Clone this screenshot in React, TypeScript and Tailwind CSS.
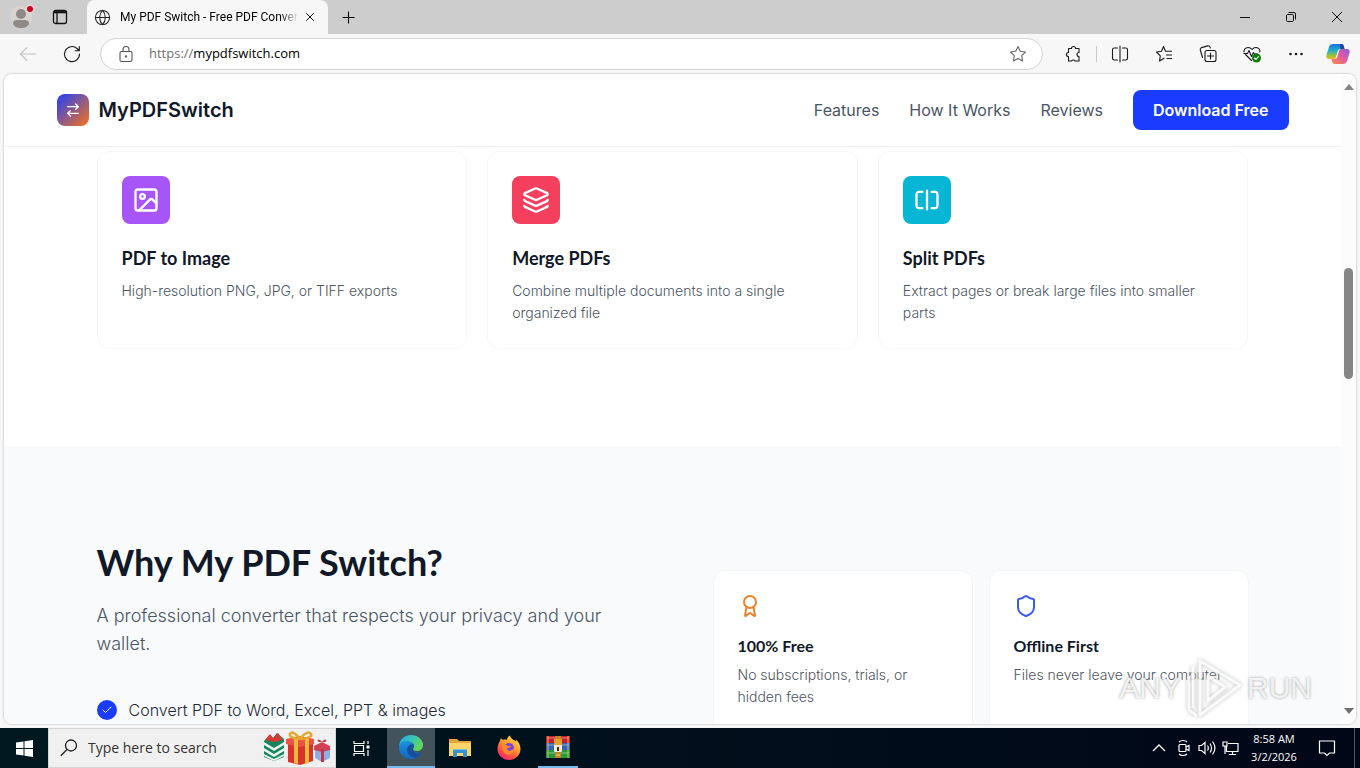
import { Award, Check, Globe, Image, Layers, Plus, Shield, X } from "lucide-react";
import type { ReactNode } from "react";

const uiFont = "font-['Open_Sans','Noto_Sans',sans-serif]";
const headingFont = "font-['Lato',sans-serif]";

const conversions = [
    { title: "PDF to Image", text: "High-resolution PNG, JPG, or TIFF exports", color: "bg-[#a855f7]", icon: <Image size={28} /> },
    { title: "Merge PDFs", text: "Combine multiple documents into a single organized file", color: "bg-[#f43f5e]", icon: <Layers size={28} /> },
    { title: "Split PDFs", text: "Extract pages or break large files into smaller parts", color: "bg-[#06b6d4]", icon: <SplitIcon /> },
];

const reasons = [
    { title: "100% Free", text: "No subscriptions, trials, or hidden fees", icon: <Award size={24} className="text-[#e8832f]" /> },
    { title: "Offline First", text: "Files never leave your computer", icon: <Shield size={24} className="text-[#3b5bef]" /> },
];

function SplitIcon() {
    return (
        <svg width="28" height="28" viewBox="0 0 24 24" fill="none" stroke="currentColor" strokeWidth="2" strokeLinecap="round" strokeLinejoin="round">
            <path d="M8 19H5c-1 0-2-1-2-2V7c0-1 1-2 2-2h3" />
            <path d="M16 5h3c1 0 2 1 2 2v10c0 1-1 2-2 2h-3" />
            <path d="M12 4v16" />
        </svg>
    );
}

function ToolButton({ label, children }: { label: string; children: ReactNode }) {
    return (
        <button aria-label={label} className="flex h-8 w-11 shrink-0 items-center justify-center">
            {children}
        </button>
    );
}

function Line({ children, className = "", size = 18 }: { children: ReactNode; className?: string; size?: number }) {
    return (
        <svg width={size} height={size} viewBox="0 0 18 18" fill="none" stroke="currentColor" strokeWidth="1.1" strokeLinecap="round" strokeLinejoin="round" className={className}>
            {children}
        </svg>
    );
}

function TabBar() {
    return (
        <div className="flex h-[34px] shrink-0 bg-[#cdcdcd]">
            <div className="flex w-[87px] shrink-0 items-center">
                <button aria-label="Profile" className="flex w-11 justify-center">
                    <svg width="26" height="26" viewBox="0 0 26 26">
                        <circle cx="12" cy="13" r="11" fill="#d9d4d0" />
                        <circle cx="12" cy="10" r="5" fill="#8f8a86" />
                        <path d="M4 19c0-2 2-3 4-3h8c2 0 4 1 4 3 0 3-4 5-8 5s-8-2-8-5z" fill="#8f8a86" />
                        <circle cx="21" cy="5" r="4.500" fill="#e6d6d6" />
                        <circle cx="21" cy="5" r="3" fill="#d0021b" />
                    </svg>
                </button>
                <button aria-label="Tab actions" className="flex w-8 justify-center">
                    <svg width="16" height="16" viewBox="0 0 16 16" fill="none" stroke="#111" strokeWidth="1.3">
                        <rect x="1.5" y="1.5" width="13" height="13" rx="2" />
                        <path d="M2 3.200h12" strokeWidth="2.200" />
                        <path d="M5 4v10" />
                    </svg>
                </button>
            </div>
            <div className="flex w-[241px] shrink-0 items-center rounded-t-lg bg-[#f7f7f7] pl-[7px]">
                <Globe size={17} strokeWidth={1.5} className="shrink-0 text-[#222]" />
                <span className="ml-[9px] w-[178px] whitespace-nowrap bg-linear-to-r from-black from-90% to-transparent bg-clip-text font-['Roboto',sans-serif] text-xs text-transparent">
                    My PDF Switch - Free PDF Conver
                </span>
                <button aria-label="Close tab" className="flex w-6 shrink-0 justify-center">
                    <X size={14} strokeWidth={1.6} />
                </button>
            </div>
            <button aria-label="New tab" className="flex w-10 items-center justify-center">
                <Plus size={19} strokeWidth={1.4} />
            </button>
            <div className="grow" />
            <button aria-label="Minimize" className="flex w-[46px] items-center justify-center">
                <svg width="12" height="12" viewBox="0 0 12 12" stroke="#111"><path d="M1 6.5h10" /></svg>
            </button>
            <button aria-label="Restore" className="flex w-[46px] items-center justify-center">
                <svg width="12" height="12" viewBox="0 0 12 12" stroke="#111" fill="none">
                    <rect x="1.5" y="3.5" width="7" height="7" rx="1.2" />
                    <path d="M3.5 1.5H9a1.5 1.5 0 0 1 1.500 1.500v5.500" />
                </svg>
            </button>
            <button aria-label="Close" className="flex w-[46px] items-center justify-center">
                <svg width="12" height="12" viewBox="0 0 12 12" stroke="#111"><path d="M1 1l10 10M11 1L1 11" /></svg>
            </button>
        </div>
    );
}

function CopilotIcon() {
    return (
        <svg width="24" height="22" viewBox="0 0 24 22">
            <defs>
                <linearGradient id="cpA" x1="0" y1="0" x2="0" y2="1">
                    <stop offset="0" stopColor="#1b6fe0" />
                    <stop offset="0.45" stopColor="#22b2c8" />
                    <stop offset="0.75" stopColor="#8fc13c" />
                    <stop offset="1" stopColor="#f2b91d" />
                </linearGradient>
                <linearGradient id="cpB" x1="1" y1="0" x2="0" y2="1">
                    <stop offset="0" stopColor="#8b5be0" />
                    <stop offset="0.5" stopColor="#e65c9c" />
                    <stop offset="1" stopColor="#f98a4b" />
                </linearGradient>
            </defs>
            <path d="M7 1h8c2 0 2.600 1 3 3l.5 2h-4c-2 0-2.500 1-3 3l-1.500 5c-.5 1.500-1 2-3 2H3c-2.500 0-3-2-2.500-4l2.500-8C3.600 2 5 1 7 1z" fill="url(#cpA)" />
            <path d="M17 21H9c-2 0-2.600-1-3-3l-.5-2h3c2 0 2.500-1 3-3L13 8c.5-1.500 1-2 3-2h5c2.500 0 3 2 2.500 4L21 18c-.6 2-2 3-4 3z" fill="url(#cpB)" />
            <path d="M13.500 1H15c2 0 2.600 1 3 3l.5 2h-4l-1-5z" fill="#1748a8" />
        </svg>
    );
}

function Toolbar() {
    return (
        <div className="flex h-10 shrink-0 items-center bg-[#f7f7f7]">
            <div className="flex w-[100px] shrink-0 items-center pl-1.5">
                <ToolButton label="Back">
                    <Line className="text-[#c4c4c4]"><path d="M16.500 9H1.500M8 2.500L1.500 9 8 15.500" /></Line>
                </ToolButton>
                <ToolButton label="Refresh">
                    <Line className="text-[#1a1a1a]"><path d="M16.500 9a7.500 7.500 0 1 1-2.500-5.500l2 2M16.300 1.500v4.200h-4.200" /></Line>
                </ToolButton>
            </div>
            <div className="flex h-8 grow items-center rounded-full border border-[#d4d4d4] bg-white pl-4 pr-[15px]">
                <Line className="shrink-0 text-[#555]">
                    <rect x="3" y="6.500" width="12" height="10" rx="1.500" />
                    <path d="M6 6.500V4.500a3 3 0 0 1 6 0v2" />
                    <circle cx="9" cy="11.500" r=".6" fill="currentColor" />
                </Line>
                <label htmlFor="address" className={`${uiFont} ml-3.5 text-[13px] text-[#707070]`}>https://</label>
                <input id="address" defaultValue="mypdfswitch.com" className={`${uiFont} w-20 grow bg-transparent text-[13px] text-black outline-none`} />
                <Line className="shrink-0 text-[#666]"><path d="M9 1.500l2.300 4.800 5.200.7-3.800 3.700.9 5.300L9 13.500 4.400 16l.9-5.300L1.500 7l5.200-.7z" /></Line>
            </div>
            <div className="ml-2 flex shrink-0 items-center text-[#1a1a1a]">
                <ToolButton label="Extensions">
                    <Line><path d="M4.500 3.500h3a2 2 0 1 1 4 0h3.500v4a2 2 0 1 0 0 4V16h-4a2 2 0 0 0-3.500 0h-3v-4.500a2 2 0 1 1 0-4z" /></Line>
                </ToolButton>
                <div className="mx-px h-4 w-px bg-[#c9c9c9]" />
                <ToolButton label="Split screen">
                    <Line><path d="M6.500 3H3.200C2 3 1.500 3.600 1.500 4.700v8.600c0 1.100.5 1.700 1.700 1.700h3.300M11.500 3h3.300c1.200 0 1.700.6 1.700 1.700v8.600c0 1.100-.5 1.700-1.700 1.700h-3.300M9 1v16" /></Line>
                </ToolButton>
                <ToolButton label="Favorites">
                    <Line><path d="M9 13.200L4.500 16l.8-5.200L1.500 7l5-.7L8.500 1.500l2 4.800h6M11.500 10h5M12 13.500h4.500" /></Line>
                </ToolButton>
                <ToolButton label="Collections">
                    <Line>
                        <rect x="6" y="5.500" width="11" height="11" rx="2" />
                        <path d="M11.500 8v6M8.500 11h6M3.500 12.500L1.300 5a2 2 0 0 1 1.300-2.400l6-1.700a2 2 0 0 1 2.500 1.400l.2.700" />
                    </Line>
                </ToolButton>
                <ToolButton label="Browser essentials">
                    <Line>
                        <path d="M8.500 15.500L2.500 9.500M1 7C.8 2.500 6 1 9 4.500 12 1 17.500 2.500 16.800 7M1 8.500h3.500l1.500-3 2.500 6 2-4 1 1.500h3" />
                        <circle cx="13.500" cy="13" r="4.500" fill="#107c10" stroke="none" />
                        <path d="M11.500 13l1.500 1.500 2.500-3" stroke="#fff" />
                    </Line>
                </ToolButton>
                <ToolButton label="Settings and more">
                    <Line><g fill="currentColor" stroke="none"><circle cx="3.500" cy="9" r="1.300" /><circle cx="9" cy="9" r="1.300" /><circle cx="14.500" cy="9" r="1.300" /></g></Line>
                </ToolButton>
                <div className="-ml-0.5">
                    <ToolButton label="Copilot"><CopilotIcon /></ToolButton>
                </div>
            </div>
        </div>
    );
}

function Header() {
    return (
        <header className="shrink-0 border-b border-[#f0f1f3] bg-white shadow-sm">
            <div className="mx-auto flex h-[72px] max-w-7xl items-center justify-between px-6">
                <a href="#top" className="flex items-center gap-2.5">
                    <span className="flex size-8 items-center justify-center rounded-lg bg-linear-to-br/srgb from-[#1e3fff] to-[#f97316] text-white">
                        <svg width="16" height="16" viewBox="0 0 24 24" fill="none" stroke="currentColor" strokeWidth="2" strokeLinecap="round" strokeLinejoin="round">
                            <path d="M4 7h16M16 3l4 4-4 4M20 17H4M8 13l-4 4 4 4" />
                        </svg>
                    </span>
                    <span className="text-xl font-semibold text-[#111827]">MyPDFSwitch</span>
                </a>
                <nav className="flex items-center gap-[30px] text-base text-[#4b5563]">
                    <a href="#features">Features</a>
                    <a href="#how">How It Works</a>
                    <a href="#reviews">Reviews</a>
                    <button className="h-10 rounded-lg bg-[#1a3cff] px-5 font-semibold text-white">Download Free</button>
                </nav>
            </div>
        </header>
    );
}

function Features() {
    return (
        <section id="features" className="bg-white pb-[97px] pt-1">
            <div className="mx-auto grid max-w-6xl grid-cols-3 gap-5">
                {conversions.map((item) => (
                    <div key={item.title} className="rounded-xl border border-[#f5f6f8] bg-white p-6">
                        <div className={`flex size-12 items-center justify-center rounded-lg text-white ${item.color}`}>{item.icon}</div>
                        <h3 className={`${headingFont} mt-5 text-lg font-bold leading-7 text-[#111827]`}>{item.title}</h3>
                        <p className="mt-2 text-sm font-light leading-[22px] text-[#4b5563]">{item.text}</p>
                    </div>
                ))}
            </div>
        </section>
    );
}

function Why() {
    return (
        <section className="grow bg-[#f8fafc] pt-24">
            <div className="mx-auto grid max-w-6xl grid-cols-2 gap-20">
                <div>
                    <h2 className={`${headingFont} text-4xl font-bold text-[#111827]`}>Why My PDF Switch?</h2>
                    <p className="mt-5 text-lg font-light leading-7 text-[#4b5563]">A professional converter that respects your privacy and your wallet.</p>
                    <ul className="mt-10">
                        <li className="flex items-center gap-3 text-base font-light text-[#1f2937]">
                            <span className="flex size-5 items-center justify-center rounded-full bg-[#1a3cff] text-white">
                                <Check size={12} strokeWidth={2} />
                            </span>
                            Convert PDF to Word, Excel, PPT &amp; images
                        </li>
                    </ul>
                </div>
                <div className="grid grid-cols-2 gap-4 pt-7">
                    {reasons.map((item) => (
                        <div key={item.title} className="rounded-xl border border-[#f3f4f6] bg-white px-6 pb-6 pt-[23px]">
                            {item.icon}
                            <h3 className={`${headingFont} mt-4 text-base font-bold text-[#111827]`}>{item.title}</h3>
                            <p className="mt-1.5 text-sm font-light leading-[22px] text-[#4b5563]">{item.text}</p>
                        </div>
                    ))}
                </div>
            </div>
        </section>
    );
}

function ScrollBar() {
    return (
        <div className="flex w-[15px] shrink-0 flex-col items-center bg-[#fcfcfc] py-2.5">
            <svg width="10" height="6" viewBox="0 0 10 6" fill="#858585"><path d="M5 0l5 6H0z" /></svg>
            <div className="flex w-full grow flex-col items-center pt-[178px]">
                <div className="h-[111px] w-[9px] rounded-full bg-[#858585]" />
            </div>
            <svg width="10" height="6" viewBox="0 0 10 6" fill="#707070"><path d="M5 6l5-6H0z" /></svg>
        </div>
    );
}

function Watermark() {
    return (
        <div className="pointer-events-none absolute bottom-1 right-11 flex items-center font-['Liberation_Sans',sans-serif] text-[30px] leading-none text-white/80 [text-shadow:0_0_3px_#9a9a9a]">
            <span>ANY</span>
            <svg width="66" height="64" viewBox="0 0 66 64" fill="none" strokeLinejoin="round" className="drop-shadow-[0_0_2px_#b0b0b0]">
                <path d="M19 5l40 24-40 30zM27 20v25l17-14zM8 20v34l8 6M12 10v42" stroke="#fff" strokeOpacity=".85" strokeWidth="3" />
            </svg>
            <span>RUN</span>
        </div>
    );
}

function GiftsIcon() {
    return (
        <svg width="70" height="34" viewBox="0 0 70 34">
            <path d="M2 10l6-6 3 3 4-5 7 6v18l-10 4-10-4z" fill="#17845c" />
            <path d="M3 9l5-6 3 4 5-5 5 7-9 2z" fill="#d43a35" />
            <path d="M2 11l10 6 10-6v3l-10 6-10-6zM2 17l10 6 10-6v3l-10 6-10-6zM2 23l10 5 10-5v2l-10 5-10-5z" fill="#e9f4ec" />
            <path d="M26 10l12 3 13-3v20l-13 4-12-3z" fill="#d8322c" />
            <path d="M24 8l14-3 14 3v5l-14 3-14-3z" fill="#ed5144" />
            <path d="M32 8h4v25l-4-1zM43 8h4v24l-4 1z" fill="#f1b93b" />
            <path d="M38 8c-4-6-9-8-10-5s5 5 10 5zm0 0c4-6 9-8 11-5s-6 5-11 5z" fill="none" stroke="#e4a72e" strokeWidth="2.500" />
            <path d="M53 16l8-3 7 4v10l-8 4-7-4z" fill="#8eafe5" />
            <path d="M52 15l8-4 8 4v4l-8 2-8-2z" fill="#d14155" />
            <path d="M60 11c-4-5-6-1-3 0zm0 0c4-5 6-1 3 0zM59 18h3v13h-3z" fill="#be354e" />
        </svg>
    );
}

function EdgeIcon() {
    return (
        <svg width="26" height="26" viewBox="0 0 26 26">
            <defs>
                <linearGradient id="edgeTop" x1="0" y1="0" x2="1" y2="0.400">
                    <stop offset="0" stopColor="#1ba7e0" />
                    <stop offset="0.500" stopColor="#35c1c0" />
                    <stop offset="1" stopColor="#61d65b" />
                </linearGradient>
                <linearGradient id="edgeBody" x1="0" y1="0" x2="0" y2="1">
                    <stop offset="0" stopColor="#1c8fdc" />
                    <stop offset="1" stopColor="#1467bf" />
                </linearGradient>
            </defs>
            <path d="M1 13C1 5 7 1 13 1s12 4 12 10c0 4-3 6-6 6-3 0-4-1-4-2s1-1 1-3c0-3-4-5-8-4-4 0-7 3-7 5z" fill="url(#edgeTop)" />
            <path d="M1 13c0-3 3-6 7-6 4 0 8 2 8 5 0 2-1 2-1 3 0 2 3 4 8 4-2 4-6 6-10 6C6 25 1 20 1 13z" fill="url(#edgeBody)" />
            <path d="M15.200 10.500C13 9.500 9 12 9 16c0 4 4 7 8 8 3-1 5-2.500 6.500-5-4 1.500-8.500-.5-8.500-4 0-1.200 1-1.500 1-3 0-.6-.3-1.100-.8-1.500z" fill="#174f9c" />
        </svg>
    );
}

function ExplorerIcon() {
    return (
        <svg width="24" height="20" viewBox="0 0 24 20">
            <path d="M1 1h8l2 2h12v4H1z" fill="#e5a63b" />
            <path d="M1 5h22v13H1z" fill="#fbd567" />
            <path d="M5 19v-6c0-1 1-2 2-2h10c1 0 2 1 2 2v6h-4v-4H9v4z" fill="#3792d4" />
            <path d="M5 11.500h14" stroke="#76bfe8" />
        </svg>
    );
}

function FirefoxIcon() {
    return (
        <svg width="26" height="26" viewBox="0 0 26 26">
            <defs>
                <linearGradient id="fox" x1="0.800" y1="0" x2="0.200" y2="1">
                    <stop offset="0" stopColor="#ffe14d" />
                    <stop offset="0.450" stopColor="#ff9629" />
                    <stop offset="0.750" stopColor="#ff4646" />
                    <stop offset="1" stopColor="#e52088" />
                </linearGradient>
            </defs>
            <path d="M4 6c0-1 .5-2 1-3 .5 1 1 1.500 2 2 1-.5 3-.7 4 0 0-2 1-3.500 3-4.500 0 2 2 3 3.500 4.500 1.500 0 1.500 1 2.500 1.500 0-1 0-1.500-.3-2C23 7 24.500 10 24.500 14c0 6-5 11-11.500 11S1.500 20 1.500 14c0-3 1-6 2.500-8z" fill="url(#fox)" />
            <circle cx="13" cy="13" r="5" fill="#7b3fe0" />
            <path d="M6 10c3-1 5 0 6 1 2 0 2 0 3 .5-1 1.500-3 1-4 2.500 1 3 5 2 7-1 0 5-4 7-7 6.500S6 15 6 10z" fill="#ff8a2b" />
        </svg>
    );
}

function WinrarIcon() {
    return (
        <svg width="26" height="24" viewBox="0 0 26 24">
            <path d="M1 1h24v7H1z" fill="#c4202f" />
            <path d="M1 8h24v7H1z" fill="#3163bd" />
            <path d="M1 15h24v8H1z" fill="#259a3c" />
            <path d="M2 3h22M2 10h22M2 18h22" stroke="#fff" strokeOpacity=".45" />
            <path d="M3 1v22M23 1v22" stroke="#e3b33d" />
            <path d="M10 1h6v22h-6z" fill="#c58325" />
            <rect x="9" y="8" width="8" height="9" rx="1" fill="#f5ead2" />
            <path d="M9 4h8v6H9z" fill="#e5a12e" />
            <path d="M12 12h2v4h-2z" fill="#3a2a20" />
            <path d="M11 20h4" stroke="#ffdf76" />
        </svg>
    );
}

function Taskbar() {
    return (
        <footer className={`${uiFont} flex h-10 shrink-0 bg-linear-to-r from-[#001820] to-[#010717] text-white`}>
            <button aria-label="Start" className="flex w-12 items-center justify-center">
                <svg width="17" height="17" viewBox="0 0 17 17" fill="#fff">
                    <path d="M0 2.500l7.500-1.100V8H0zM8.500 1.200L17 0v8H8.500zM0 9h7.500v6.600L0 14.500zM8.500 9H17v8l-8.500-1.200z" />
                </svg>
            </button>
            <div className="flex w-72 items-center border border-[#d5d5d5] bg-[#f0f0f0] pl-[11px]">
                <svg width="18" height="18" viewBox="0 0 18 18" fill="none" stroke="#222" strokeWidth="1.300">
                    <circle cx="11" cy="6.500" r="5.500" />
                    <path d="M7 10.500L.8 16.800" />
                </svg>
                <input aria-label="Search" placeholder="Type here to search" className="ml-2.5 w-[174px] bg-transparent text-sm text-black outline-none placeholder:text-[#333]" />
                <GiftsIcon />
            </div>
            <button aria-label="Task view" className="flex w-[51px] items-center justify-center">
                <svg width="18" height="17" viewBox="0 0 18 17" fill="none" stroke="#fff" strokeWidth="1.200">
                    <path d="M1 1v2.500h10V1M1 16v-2.500h10V16M1.500 5.500h9v6h-9zM15 1v3M15 10v6" />
                    <path d="M13.500 5.500h3v3h-3z" fill="#fff" stroke="none" />
                </svg>
            </button>
            <button aria-label="Edge" className="flex w-12 items-center justify-center border-b-2 border-[#76b9ed] bg-[#43535c]"><EdgeIcon /></button>
            <button aria-label="File Explorer" className="flex w-[49px] items-center justify-center"><ExplorerIcon /></button>
            <button aria-label="Firefox" className="flex w-[49px] items-center justify-center"><FirefoxIcon /></button>
            <button aria-label="WinRAR" className="ml-[5px] flex w-10 items-center justify-center border-b-2 border-[#76b9ed]"><WinrarIcon /></button>
            <div className="grow" />
            <div className="flex items-center gap-1.5">
                <svg width="14" height="8" viewBox="0 0 14 8" fill="none" stroke="#fff" strokeWidth="1.300"><path d="M1 7l6-6 6 6" /></svg>
                <svg width="16" height="18" viewBox="0 0 16 18" fill="none" stroke="#fff" strokeWidth="1.200" className="ml-1">
                    <rect x="3" y="5.500" width="7" height="7" rx="1" />
                    <path d="M10 8l3-1.500v5L10 10M3 3c2-2 6-2 8 0M3 15c2 2 6 2 8 0" />
                </svg>
                <svg width="18" height="16" viewBox="0 0 18 16" fill="none" stroke="#fff" strokeWidth="1.200">
                    <path d="M1 5.500h2.500L7 2.500v11l-3.500-3H1zM9.500 5.500c1 1.500 1 3.500 0 5M12 3.500c2 2.500 2 6.500 0 9M14.500 1.500c3 4 3 9 0 13" />
                </svg>
                <svg width="17" height="14" viewBox="0 0 17 14" fill="none" stroke="#fff" strokeWidth="1.200">
                    <path d="M6 2.500h10v8H4.500v-5M7 13.500h7M10.500 11v2.500M1 1h4v4H1zM3 5v8" />
                </svg>
            </div>
            <div className="flex w-[70px] flex-col items-center justify-center text-[11px] leading-[18px]">
                <span>8:58 AM</span>
                <span>3/2/2026</span>
            </div>
            <button aria-label="Notifications" className="flex w-9 items-center justify-center">
                <svg width="18" height="18" viewBox="0 0 18 18" fill="none" stroke="#fff" strokeWidth="1.200"><path d="M1.500 2h15v12h-5L9 16.500 6.500 14h-5z" /></svg>
            </button>
            <div className="ml-[9px] w-1.5 border-l border-[#4b5563]" />
        </footer>
    );
}

export default function App() {
    return (
        <div className="flex h-screen flex-col overflow-hidden bg-[#f7f7f7] font-['Inter',sans-serif]">
            <TabBar />
            <Toolbar />
            <main className="relative mx-1 mb-1 flex min-h-0 grow overflow-hidden rounded-lg bg-white shadow-[0_0_2px_#9a9a9a]">
                <div className="flex min-w-0 grow flex-col">
                    <Header />
                    <Features />
                    <Why />
                </div>
                <ScrollBar />
                <Watermark />
            </main>
            <Taskbar />
        </div>
    );
}
